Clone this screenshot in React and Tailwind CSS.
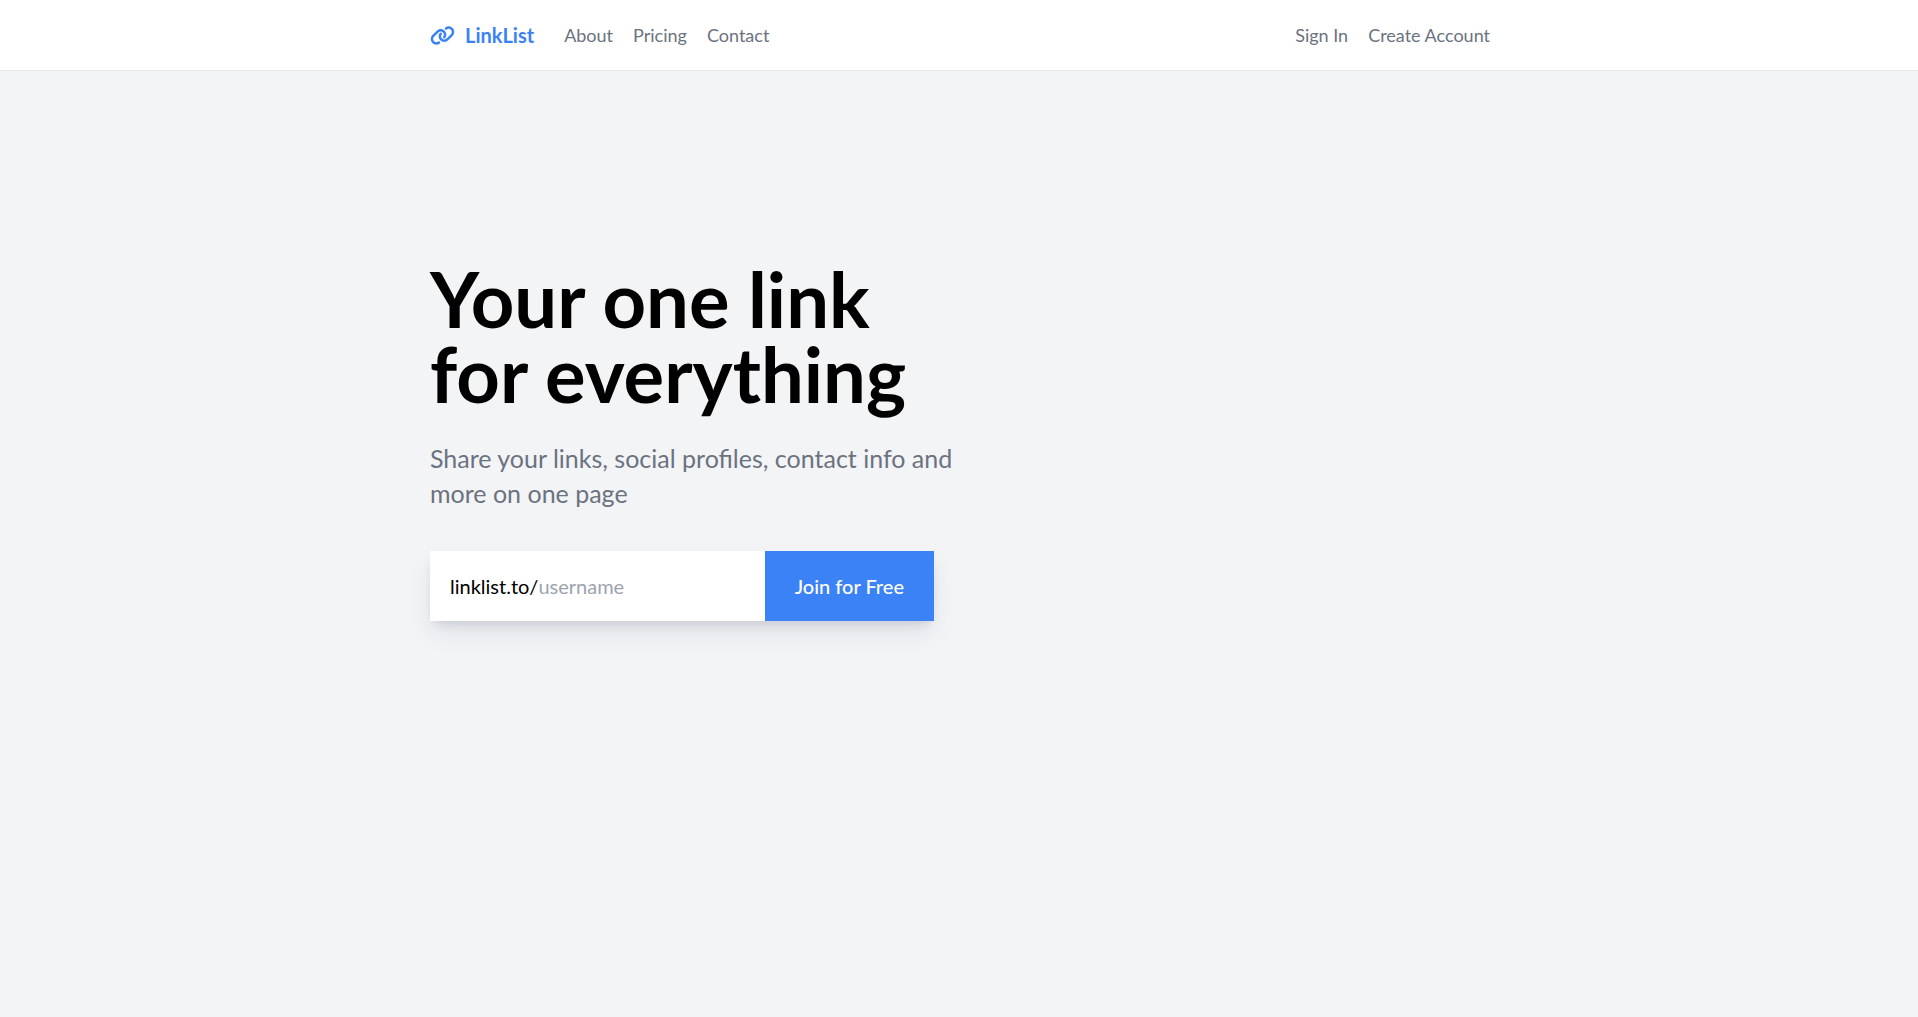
import { FaLink } from "react-icons/fa6";

function NavLink({ children }) {
  return (
    <a href="#" className="text-lg leading-[30px] text-[#6b7280]">
      {children}
    </a>
  );
}

export default function App() {
  return (
    <div className="flex min-h-screen flex-col bg-[#f3f4f6] font-['Lato',sans-serif] text-black">
      <header className="border-b border-[#e5e7eb] bg-white">
        <nav className="mx-auto flex max-w-[1062px] items-center justify-between py-5 pl-0.5">
          <div className="flex items-center">
            <a href="#" className="mr-[30px] flex items-center gap-2.5 text-xl leading-[30px] font-bold text-[#3b82f6]">
              <FaLink className="size-[25px]" />
              LinkList
            </a>
            <div className="flex gap-5">
              <NavLink>About</NavLink>
              <NavLink>Pricing</NavLink>
              <NavLink>Contact</NavLink>
            </div>
          </div>
          <div className="flex gap-5">
            <NavLink>Sign In</NavLink>
            <NavLink>Create Account</NavLink>
          </div>
        </nav>
      </header>
      <main className="mx-auto w-full max-w-[1062px] pt-[190px] pl-0.5">
        <h1 className="text-[76px] leading-[75px] font-bold">
          Your one link
          <br />
          for everything
        </h1>
        <p className="mt-[30px] max-w-[530px] text-[25px] leading-[35px] text-[#6b7280]">
          Share your links, social profiles, contact info and more on one page
        </p>
        <form
          className="mt-10 flex w-[504px] text-xl shadow-[0_12px_25px_-2px_rgba(31,41,80,0.1),0_6px_10px_-5px_rgba(31,41,80,0.16)]"
          onSubmit={(e) => e.preventDefault()}
        >
          <div className="flex min-w-0 flex-1 items-center bg-white px-5">
            <label htmlFor="username">linklist.to/</label>
            <input id="username" placeholder="username" className="min-w-0 flex-1 outline-none placeholder:text-[#9ca3af]" />
          </div>
          <button className="bg-[#3b82f6] px-[30px] py-5 leading-[30px] font-medium text-white">Join for Free</button>
        </form>
      </main>
    </div>
  );
}
